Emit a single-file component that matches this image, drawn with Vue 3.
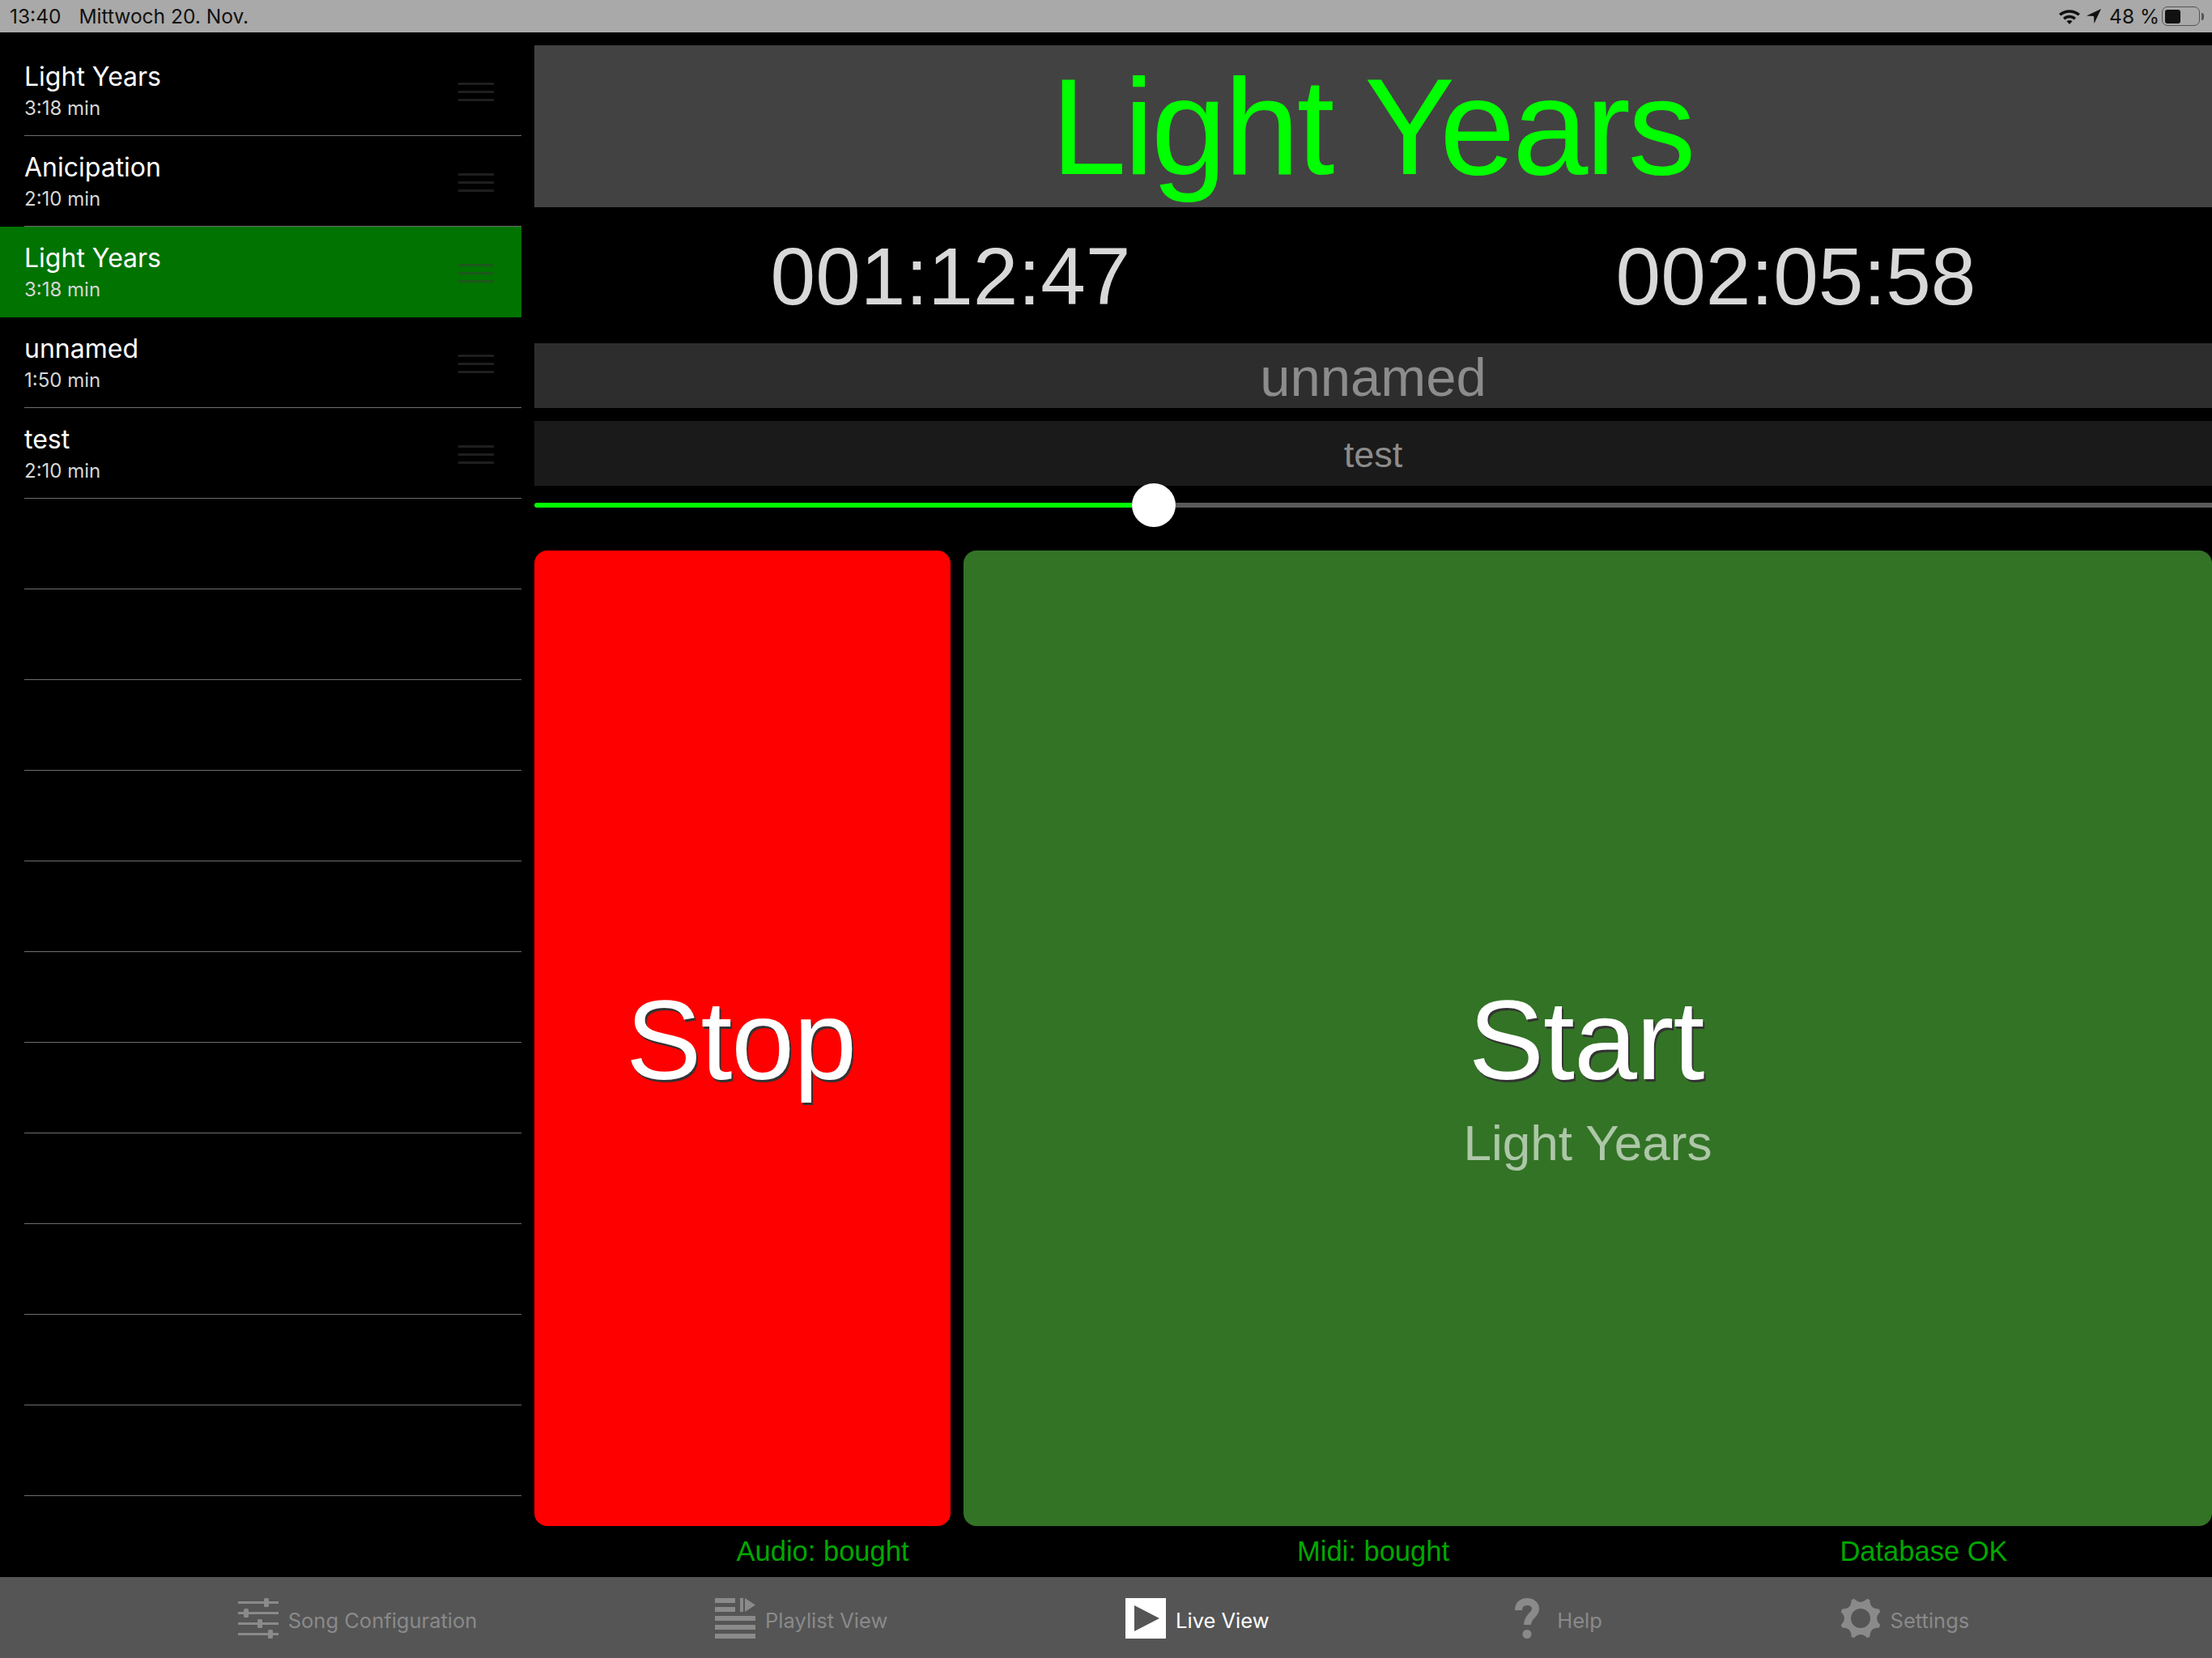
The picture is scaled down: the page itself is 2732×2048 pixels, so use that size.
<template>
  <div class="app">
    <!-- status bar -->
    <div class="status-bar">
      <span class="time">13:40</span>
      <span class="date">Mittwoch 20. Nov.</span>
      <div class="status-right">
        <svg class="wifi" width="28" height="20" viewBox="0 0 28 20">
          <path d="M1 7 C8 0.5 20 0.5 27 7 L24.6 9.6 C18.8 4.4 9.2 4.4 3.4 9.6 Z" fill="#111" />
          <path d="M6 12 C10.5 7.8 17.5 7.8 22 12 L19.6 14.5 C16.2 11.6 11.8 11.6 8.4 14.5 Z" fill="#111" />
          <path d="M10.5 16.2 C12.6 14.6 15.4 14.6 17.5 16.2 L14 20 Z" fill="#111" />
        </svg>
        <svg class="arrow" width="18" height="18" viewBox="0 0 18 18">
          <path d="M18 0 L0 8.5 L9 9 L9.5 18 Z" fill="#111" />
        </svg>
        <span class="battery-text">48 %</span>
        <div class="battery"><div class="battery-fill"></div></div>
        <div class="battery-tip"></div>
      </div>
    </div>

    <div class="content">
      <!-- song list -->
      <div class="sidebar">
        <div v-for="(song, index) in rows" :key="index" class="row" :class="{ selected: song.selected }">
          <template v-if="song.name">
            <div class="row-text">
              <div class="row-title">{{ song.name }}</div>
              <div class="row-sub">{{ song.length }}</div>
            </div>
            <div class="handle"><i></i><i></i><i></i></div>
          </template>
        </div>
      </div>

      <!-- live view -->
      <div class="main">
        <div class="title-bar">Light Years</div>
        <div class="timers">
          <div>001:12:47</div>
          <div>002:05:58</div>
        </div>
        <div class="next-bar">unnamed</div>
        <div class="after-bar">test</div>
        <div class="slider">
          <div class="slider-fill" :style="{ width: progress + 'px' }"></div>
          <div class="slider-thumb"></div>
          <div class="slider-rest"></div>
        </div>
        <div class="buttons">
          <div class="btn stop">
            <div class="btn-title">Stop</div>
            <div class="btn-sub"></div>
          </div>
          <div class="btn start">
            <div class="btn-title">Start</div>
            <div class="btn-sub">Light Years</div>
          </div>
        </div>
        <div class="infos">
          <div>Audio: bought</div>
          <div>Midi: bought</div>
          <div>Database OK</div>
        </div>
      </div>
    </div>

    <!-- tab bar -->
    <div class="tabbar">
      <div class="tab">
        <svg width="50" height="50" viewBox="0 0 50 50" fill="#8a8a8a">
          <rect x="0" y="4" width="50" height="3" />
          <rect x="0" y="17" width="50" height="3" />
          <rect x="0" y="30" width="50" height="3" />
          <rect x="0" y="43" width="50" height="3" />
          <rect x="32" y="0" width="6" height="11" rx="1.5" />
          <rect x="7" y="13" width="6" height="11" rx="1.5" />
          <rect x="24" y="26" width="6" height="11" rx="1.5" />
          <rect x="37" y="39" width="6" height="11" rx="1.5" />
        </svg>
        <span>Song Configuration</span>
      </div>
      <div class="tab">
        <svg width="50" height="50" viewBox="0 0 50 50" fill="#8a8a8a">
          <rect x="0" y="0" width="25" height="6" />
          <rect x="0" y="11" width="25" height="6" />
          <rect x="0" y="22" width="50" height="6" />
          <rect x="0" y="33" width="50" height="6" />
          <rect x="0" y="44" width="50" height="6" />
          <rect x="31" y="0" width="4" height="17" />
          <path d="M37 0 L50 8.5 L37 17 Z" />
        </svg>
        <span>Playlist View</span>
      </div>
      <div class="tab active">
        <svg width="50" height="50" viewBox="0 0 50 50">
          <rect x="0" y="0" width="50" height="50" fill="#fff" />
          <path d="M11 9 L42 25 L11 41 Z" fill="#555" />
        </svg>
        <span>Live View</span>
      </div>
      <div class="tab">
        <svg width="50" height="50" viewBox="0 0 50 50">
          <path d="M14.5 15 C14.5 8 19 4.5 25 4.5 C31 4.5 35.500 8 35.500 13.500 C35.500 21 25.500 22 25.500 33" fill="none" stroke="#8a8a8a" stroke-width="9" />
          <circle cx="25" cy="44.500" r="5.500" fill="#8a8a8a" />
        </svg>
        <span>Help</span>
      </div>
      <div class="tab">
        <svg width="50" height="50" viewBox="0 0 50 50">
          <path :d="gearPath" fill="#8a8a8a" fill-rule="evenodd" />
        </svg>
        <span>Settings</span>
      </div>
    </div>
  </div>
</template>

<script setup>
const songs = [
  { name: 'Light Years', length: '3:18 min' },
  { name: 'Anicipation', length: '2:10 min' },
  { name: 'Light Years', length: '3:18 min', selected: true },
  { name: 'unnamed', length: '1:50 min' },
  { name: 'test', length: '2:10 min' }
]

// the table always shows 16 rows, the rest stay empty
const rows = [...songs, ...Array(11).fill({})]

const progress = 738

// gear with 8 teeth, valleys are curved inwards
function buildGear() {
  const cx = 25
  const cy = 25
  const point = (r, deg) => {
    const a = (deg - 90) * Math.PI / 180
    return (cx + r * Math.cos(a)).toFixed(2) + ' ' + (cy + r * Math.sin(a)).toFixed(2)
  }
  let d = ''
  for (let i = 0; i < 8; i++) {
    const tooth = 22.5 + i * 45
    d += (i === 0 ? 'M' : 'L') + point(25.5, tooth - 4) + ' L' + point(25.5, tooth + 4)
    d += ' Q' + point(16, tooth + 22.5) + ' ' + point(25.5, tooth + 41) + ' '
  }
  d += 'Z M37 25 A12 12 0 1 0 13 25 A12 12 0 1 0 37 25 Z'
  return d
}
const gearPath = buildGear()
</script>

<style scoped>
.app {
  width: 2732px;
  height: 2048px;
  display: flex;
  flex-direction: column;
  background-color: #000;
  overflow: hidden;
  font-family: "Liberation Sans", Arial, sans-serif;
}

.status-bar {
  height: 40px;
  flex: none;
  display: flex;
  align-items: center;
  padding: 0 10px 0 12px;
  background-color: #a9a9a9;
  color: #111;
  font-family: Inter, sans-serif;
  font-size: 24.500px;
}

.date {
  margin-left: 22px;
}

.status-right {
  margin-left: auto;
  display: flex;
  align-items: center;
}

.wifi {
  margin-right: 7px;
}

.arrow {
  margin-right: 10px;
}

.battery-text {
  margin-right: 3px;
}

.battery {
  width: 47px;
  height: 24px;
  box-sizing: border-box;
  border: 1.500px solid #555;
  border-radius: 7px;
  padding: 2.500px;
}

.battery-fill {
  width: 19px;
  height: 100%;
  background-color: #111;
  border-radius: 3px;
}

.battery-tip {
  width: 3px;
  height: 9px;
  margin-left: 2px;
  background-color: #555;
  border-radius: 0 3px 3px 0;
}

.content {
  flex: 1;
  display: flex;
  min-height: 0;
}

.sidebar {
  width: 644px;
  flex: none;
  padding-top: 16px;
  margin-right: 16px;
}

.row {
  height: 112px;
  box-sizing: border-box;
  padding-left: 30px;
  display: flex;
  align-items: flex-start;
  position: relative;
  color: #fff;
  font-family: Inter, sans-serif;
}

.row::after {
  content: "";
  position: absolute;
  left: 30px;
  right: 0;
  bottom: 0;
  height: 1px;
  background-color: #6e6e6e;
}

.row.selected {
  background-color: #007300;
}

.row.selected::after {
  display: none;
}

.row-text {
  flex: 1;
}

.row-title {
  font-size: 32px;
  line-height: 40px;
  margin-top: 19px;
}

.row-sub {
  font-size: 24px;
  line-height: 30px;
  margin-top: 4px;
  color: #d6d6d6;
}

.handle {
  width: 44px;
  margin: 46px 34px 0 0;
  display: flex;
  flex-direction: column;
  gap: 7px;
}

.handle i {
  display: block;
  height: 3px;
  background-color: rgba(60, 60, 60, 0.5);
}

.main {
  flex: 1;
  min-width: 0;
  padding-top: 16px;
  display: flex;
  flex-direction: column;
}

.title-bar {
  height: 200px;
  box-sizing: border-box;
  padding: 3px 3px 0 0;
  flex: none;
  display: flex;
  align-items: center;
  justify-content: center;
  background-color: #424242;
  color: #0f0;
  font-size: 168px;
  letter-spacing: -3.500px;
}

.timers {
  height: 168px;
  box-sizing: border-box;
  padding: 3px 14px 0;
  flex: none;
  display: grid;
  grid-template-columns: 1fr 1fr;
  column-gap: 44px;
  align-items: center;
  text-align: center;
  color: #d8d8d8;
  font-size: 100px;
}

.next-bar {
  height: 80px;
  box-sizing: border-box;
  padding-top: 2px;
  flex: none;
  display: flex;
  align-items: center;
  justify-content: center;
  background-color: #2d2d2d;
  color: #8c8c8c;
  font-size: 67px;
}

.after-bar {
  height: 80px;
  box-sizing: border-box;
  padding-top: 3px;
  flex: none;
  margin-top: 16px;
  display: flex;
  align-items: center;
  justify-content: center;
  background-color: #1a1a1a;
  color: #8c8c8c;
  font-size: 45px;
}

.slider {
  height: 54px;
  flex: none;
  margin-top: -3px;
  display: flex;
  align-items: center;
  position: relative;
}

.slider-fill {
  height: 6px;
  flex: none;
  background-color: #0f0;
  border-radius: 3px 0 0 3px;
}

.slider-thumb {
  width: 54px;
  height: 54px;
  flex: none;
  border-radius: 50%;
  background-color: #fff;
}

.slider-rest {
  flex: 1;
  height: 6px;
  background-color: #5a5a5a;
}

.buttons {
  flex: 1;
  min-height: 0;
  margin-top: 29px;
  display: flex;
  gap: 16px;
}

.btn {
  border-radius: 16px;
  padding-top: 96px;
  box-sizing: border-box;
  display: flex;
  flex-direction: column;
  align-items: center;
  justify-content: center;
  color: #fff;
}

.stop {
  width: 514px;
  flex: none;
  background-color: #f00;
}

.start {
  flex: 1;
  background-color: #337326;
}

.btn-title {
  font-size: 140px;
  line-height: 160px;
  letter-spacing: -1px;
  margin-right: 4px;
  text-shadow: 2px 3px 0 #333;
}

.btn-sub {
  height: 90px;
  margin-top: 2px;
  font-size: 62px;
  line-height: 90px;
  color: rgba(255, 255, 255, 0.6);
}

.infos {
  height: 63px;
  flex: none;
  padding: 0 16px;
  display: grid;
  grid-template-columns: repeat(3, 1fr);
  align-items: center;
  text-align: center;
  color: #00a800;
  font-size: 34.500px;
}

.tabbar {
  height: 100px;
  box-sizing: border-box;
  padding: 2px 6px 0 0;
  flex: none;
  display: flex;
  align-items: center;
  justify-content: space-evenly;
  background-color: #555;
  color: #8a8a8a;
  font-family: Inter, sans-serif;
  font-size: 25.500px;
}

.tab {
  display: flex;
  align-items: center;
  gap: 12px;
}

.tab span {
  margin-top: 4px;
}

.tab.active {
  color: #fff;
}
</style>

<style>
html, body {
  background-color: #000;
}
</style>
